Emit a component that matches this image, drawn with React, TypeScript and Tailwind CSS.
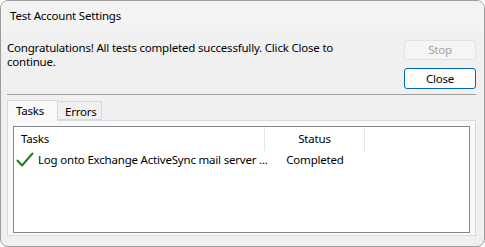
const font = { fontFamily: '"Noto Sans", "Open Sans", sans-serif' };

const CheckIcon = () => (
  <svg width="18" height="16" viewBox="0 0 18 16" className="shrink-0">
    <path d="M1.5 8.5 L6 13.5 L16.5 1.5" fill="none" stroke="#1e7f1e" strokeWidth="2" strokeLinecap="round" strokeLinejoin="round" />
  </svg>
);

const App = () => {
  return (
    <div className="w-[485px] h-[247px] bg-white text-[11.5px] tracking-[-0.2px] text-black" style={font}>
      <div className="w-full h-full flex flex-col rounded-[8px] border border-[#9c9c9c] bg-[#f0f0f0] overflow-hidden">
        {/* Title bar */}
        <div className="h-[30px] shrink-0 bg-[#f3f3f3] flex items-center pl-[9px] pb-[1px]">
          <span className="leading-none">Test Account Settings</span>
        </div>

        <div className="flex flex-col pl-[6px] pr-[8px] pt-[9px]">
          {/* Message + buttons */}
          <div className="flex justify-between">
            <p className="leading-[14px] pt-[1px] whitespace-nowrap">
              Congratulations! All tests completed successfully. Click Close to
              <br />
              continue.
            </p>
            <div className="flex flex-col gap-[8px] w-[72px]">
              <button className="h-[20px] rounded-[3px] border border-[#e3e3e3] bg-[#f5f5f5] text-[#a2a2a2] leading-none">
                Stop
              </button>
              <button className="h-[21px] rounded-[3px] border border-[#0067c0] bg-[#fdfdfd] leading-none">
                Close
              </button>
            </div>
          </div>

          <div className="h-px bg-[#a0a0a0] mt-[5px]" />

          {/* Tabs */}
          <div className="flex items-end mt-[4px] h-[21px]">
            <div className="h-[21px] w-[51px] border border-b-0 border-[#d9d9d9] bg-[#f9f9f9] pl-[8px] flex items-center relative z-10 -mb-px">
              Tasks
            </div>
            <div className="h-[19px] w-[44px] border border-l-0 border-[#d9d9d9] bg-[#f0f0f0] pl-[7px] flex items-center pt-[2px]">
              Errors
            </div>
          </div>
          <div className="h-[116px] border border-[#d9d9d9] bg-[#f9f9f9] px-[5px] pt-[5px]">
            <div className="h-[107px] border border-[#828790] bg-white">
              <div className="flex h-[24px] items-center">
                <div className="w-[251px] pl-[7px] border-r border-[#e5e5e5] h-full flex items-center">Tasks</div>
                <div className="w-[100px] text-center border-r border-[#e5e5e5] h-full flex items-center justify-center">Status</div>
              </div>
              <div className="flex h-[18px] items-center">
                <div className="w-[251px] pl-[2px] flex items-center gap-[4px] whitespace-nowrap">
                  <CheckIcon />
                  <span>Log onto Exchange ActiveSync mail server ...</span>
                </div>
                <div className="w-[100px] text-center">Completed</div>
              </div>
            </div>
          </div>
        </div>
      </div>
    </div>
  );
};

export default App;
